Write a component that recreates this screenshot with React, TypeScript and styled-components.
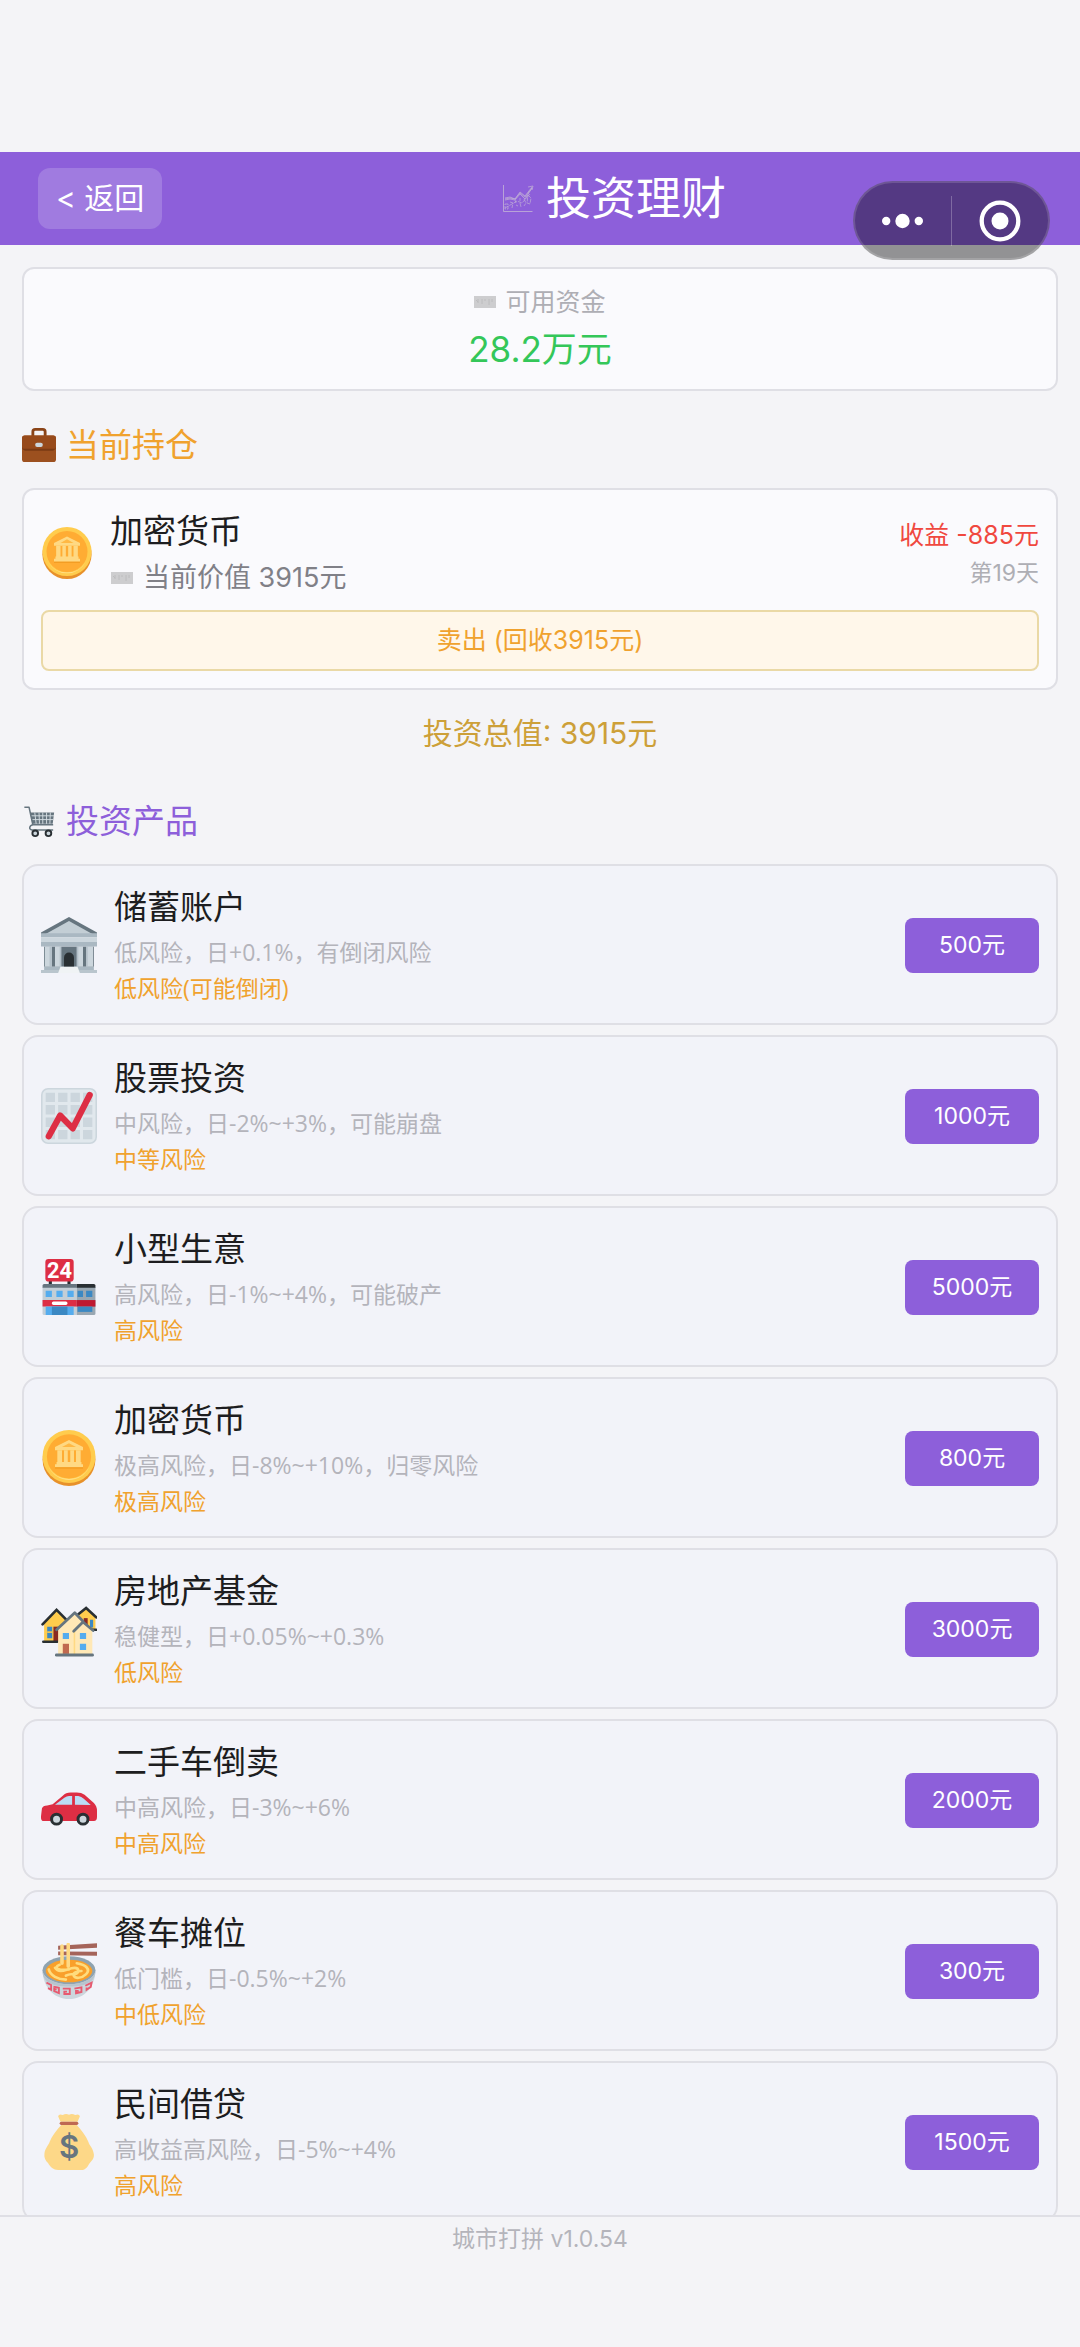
import type { ReactNode } from "react";
import styled, { createGlobalStyle } from "styled-components";

const GlobalStyle = createGlobalStyle`
  * {
    box-sizing: border-box;
  }

  body {
    margin: 0;
    background: #f4f4f7;
    color: #1d1d20;
    font-family: Inter, "Noto Sans CJK SC", sans-serif;
  }

  button {
    margin: 0;
    border: none;
    font-family: inherit;
    cursor: pointer;
  }
`;

const Page = styled.div`
  display: flex;
  flex-direction: column;
  height: 100vh;
  padding-top: 152px;
`;

const Header = styled.header`
  position: relative;
  display: grid;
  grid-template-columns: 1fr auto 1fr;
  align-items: center;
  flex: none;
  padding: 16px 38px;
  background: #8d5fda;
  color: #fff;
`;

const BackButton = styled.button`
  justify-self: start;
  padding: 0 18px;
  border-radius: 12px;
  background: #a07be0;
  color: #fff;
  font-size: 30px;
  line-height: 61px;
`;

const Title = styled.h1`
  display: flex;
  align-items: center;
  gap: 12px;
  margin: 0;
  padding-left: 148px;
  font-size: 45px;
  font-weight: 400;
  line-height: 60px;
`;

/* floats over the header and the top of the page */
const Capsule = styled.div`
  position: absolute;
  top: 29px;
  right: 30px;
  z-index: 1;
  display: flex;
  align-items: center;
  width: 197px;
  height: 79px;
  border: 2px solid rgba(255, 255, 255, 0.15);
  border-radius: 40px;
  background: rgba(0, 0, 0, 0.4);
`;

const CapsuleButton = styled.button`
  display: flex;
  flex: 1;
  justify-content: center;
  padding: 0;
  background: none;
`;

const CapsuleDivider = styled.span`
  width: 1px;
  height: 50px;
  background: rgba(255, 255, 255, 0.25);
`;

const Content = styled.main`
  flex: 1;
  min-height: 0;
  overflow-y: auto;
  padding: 22px;
  scrollbar-width: none;
`;

const Card = styled.section`
  border: 2px solid #dfdfe5;
  border-radius: 12px;
  background: #fafafd;
`;

const BalanceCard = styled(Card)`
  display: flex;
  flex-direction: column;
  align-items: center;
  gap: 7px;
  padding: 16px 16px 17px;
`;

const BalanceLabel = styled.div`
  display: flex;
  align-items: center;
  gap: 9px;
  color: #aeaeb4;
  font-size: 25px;
  line-height: 34px;
`;

const Balance = styled.div`
  color: #34c759;
  font-size: 35px;
  line-height: 46px;
`;

const SectionTitle = styled.h2<{ $color: string }>`
  display: flex;
  align-items: center;
  gap: 10px;
  margin: 31px 0 20px;
  color: ${(p) => p.$color};
  font-size: 33px;
  font-weight: 400;
  line-height: 46px;
`;

const HoldingCard = styled(Card)`
  padding: 18px 17px 17px;
`;

const HoldingRow = styled.div`
  display: flex;
  align-items: center;
  gap: 17px;
  margin-bottom: 12px;
`;

const Info = styled.div`
  flex: 1;
  min-width: 0;
`;

const Name = styled.h3`
  margin: 0 0 4px;
  font-size: 33px;
  font-weight: 400;
  line-height: 46px;
`;

const HoldingValue = styled.div`
  display: flex;
  align-items: center;
  gap: 9px;
  color: #808087;
  font-size: 27px;
  line-height: 40px;
`;

const Result = styled.div`
  padding-top: 2px;
  text-align: right;
  line-height: 38px;
`;

const Profit = styled.div`
  color: #f0483f;
  font-size: 25px;
`;

const Days = styled.div`
  color: #aeaeb4;
  font-size: 23px;
`;

const SellButton = styled.button`
  display: block;
  width: 100%;
  border: 2px solid #ead9a6;
  border-radius: 8px;
  background: #fff7ea;
  color: #f0a22e;
  font-size: 25px;
  line-height: 55px;
`;

const Total = styled.p`
  margin: 0;
  padding: 23px 0 14px;
  color: #cda039;
  font-size: 30px;
  line-height: 40px;
  text-align: center;
`;

const ProductList = styled.ul`
  display: flex;
  flex-direction: column;
  gap: 10px;
  margin: 0;
  padding: 0;
  list-style: none;
`;

const Product = styled.li`
  display: flex;
  align-items: center;
  gap: 17px;
  padding: 18px 17px 17px;
  border: 2px solid #dfdfe5;
  border-radius: 16px;
  background: #f2f3f9;
`;

const Detail = styled.div<{ $risk?: boolean }>`
  color: ${(p) => (p.$risk ? "#f0a22e" : "#b4b4bb")};
  font-family: "Open Sans", "Noto Sans CJK SC", sans-serif;
  font-size: 23px;
  line-height: 36px;
`;

const BuyButton = styled.button`
  min-width: 134px;
  border-radius: 8px;
  background: #8d5fda;
  color: #fff;
  font-size: 23px;
  line-height: 53px;
`;

const Footer = styled.footer`
  flex: none;
  padding: 4px 0 90px;
  border-top: 2px solid #dfdfe5;
  color: #b4b4bb;
  font-size: 23px;
  line-height: 36px;
  text-align: center;
`;

const Emoji = ({ size, children }: { size: number; children: ReactNode }) => (
  <svg width={size} height={size} viewBox="0 0 36 36" aria-hidden="true">
    {children}
  </svg>
);

const TrendGlyph = () => (
  <svg
    width="32"
    height="28"
    viewBox="0 0 32 28"
    fill="none"
    stroke="#c3b3d6"
    aria-hidden="true"
  >
    <path d="M1.5 0v26.5h29" opacity="0.8" />
    <path
      d="M3 13l5-1 5 2 5-7 5 4 7-9M3 15l5-1 5 1 5-6 5 5 7-11M3 14l5-1 5 1 5-6 5 4 7-9M26 2l5-1-1 4"
      opacity="0.7"
    />
    <path
      d="M3 19h3v5H3zM8 17l3 1-1 5M13 15l1 3M14 20l2 1M18 13v3M18 18l1 4M22 14l2 4-2 3M26 10l3 3-1 6-3-1zM3 23l7-4 5-3 5 2 8-9"
      strokeDasharray="4 1"
      opacity="0.65"
    />
  </svg>
);

const NoteGlyph = ({ width }: { width: number }) => (
  <svg width={width} height="12" viewBox="0 0 22 12" aria-hidden="true">
    <rect width="22" height="12" fill="#cdcdcf" />
    <path
      d="M2 4l2 2M4 3v4M8 3v5M10 4h2M15 3v6M18 3v3"
      stroke="#bcbcbe"
      fill="none"
    />
  </svg>
);

const Briefcase = () => (
  <Emoji size={34}>
    <path
      d="M11.5 9V4q0-2.5 2.5-2.5h8q2.5 0 2.5 2.5v5"
      fill="none"
      stroke="#8a4418"
      strokeWidth="3"
    />
    <rect y="8" width="36" height="28" rx="3" fill="#9c501f" />
    <path d="M0 20h36v1q-1 3-4 3H4q-3 0-4-3z" fill="#7a3a14" />
    <path d="M3 8h30q3 0 3 3v9q0 2-3 2H3q-3 0-3-2v-9q0-3 3-3z" fill="#974a1b" />
    <rect x="14" y="15.5" width="8" height="4.5" rx="2" fill="#ccd6dd" />
  </Emoji>
);

const Cart = () => (
  <Emoji size={34}>
    <path d="M8.5 9h25.5l-1.5 12H11z" fill="#66757f" />
    <path
      d="M9 12.5h25M10 16.5h23M13.5 9l1.5 12M18 9l.5 12M22 9v12M26 9v12M30 9l-.5 12"
      stroke="#d5dde2"
    />
    <path
      d="M2.5 3.5h5L11.5 22H33M11.5 22c-4 1-4.5 5-1 5.5H33"
      fill="none"
      stroke="#66757f"
      strokeWidth="1.6"
      strokeLinejoin="round"
    />
    <circle cx="14" cy="31" r="3" fill="#ccd6dd" stroke="#292f33" strokeWidth="2" />
    <circle cx="28" cy="31" r="3" fill="#ccd6dd" stroke="#292f33" strokeWidth="2" />
  </Emoji>
);

const Bank = () => (
  <>
    <path d="M18 0L36 10v2H0v-2z" fill="#66757f" />
    <path d="M18 2.5L33 11H3z" fill="#c3ced5" />
    <path d="M2 19h32v13H2z" fill="#66757f" />
    <path d="M0 10.5h36V13H0zM0 16h36v3H0z" fill="#aab8c2" />
    <path d="M0 13h36v3H0z" fill="#ccd6dd" />
    <path d="M2.5 19H7v13H2.5zM9 19h4v13H9zM23 19h4v13h-4zM29 19h4.5v13H29z" fill="#ccd6dd" />
    <path d="M5.5 19H7v13H5.5zM12 19h1v13h-1zM23 19h1v13h-1zM29 19h1v13h-1z" fill="#b4c1ca" />
    <path d="M14.8 32v-6a3.2 3.2 0 016.4 0v6z" fill="#292f33" />
    <path d="M2 32h12v2H2zM22 32h12v2H22z" fill="#aab8c2" />
    <path d="M0 34h36v2H0z" fill="#b9c5cd" />
    <path d="M12.5 32h11l1.5 4H11z" fill="#f0f3f5" />
  </>
);

const Stocks = () => (
  <>
    <rect x=".5" y=".5" width="35" height="35" rx="4" fill="#e1e8ed" stroke="#ccd6dd" />
    {[3, 11, 19, 27].map((y) => (
      <path
        key={y}
        d={`M3 ${y}h6v6H3zM11 ${y}h6v6h-6zM19 ${y}h6v6h-6zM27 ${y}h6v6h-6z`}
        fill="#ccd6dd"
      />
    ))}
    <path
      d="M5 31l7.3-13.3 8.1 8.3L31.3 4.5"
      fill="none"
      stroke="#dd2e44"
      strokeWidth="4"
      strokeLinecap="round"
      strokeLinejoin="round"
    />
  </>
);

const Store = () => (
  <>
    <path d="M5 14h2v3H5zM17 14h2v3h-2z" fill="#292f33" />
    <rect x="2.8" width="18.2" height="14.5" rx="2" fill="#dd2e44" />
    <text
      x="11.9"
      y="12"
      fill="#fff"
      fontFamily="Roboto, sans-serif"
      fontSize="14"
      fontWeight="700"
      textAnchor="middle"
    >
      24
    </text>
    <path d="M1 18h22v18H2q-1 0-1-1z" fill="#c3ced6" />
    <path d="M23 18h12v17q0 1-1 1H23z" fill="#99a7b2" />
    <path d="M2 16h21v2.5H1V17q0-1 1-1z" fill="#66757f" />
    <path d="M23 16h11q1 0 1 1v1.5H23z" fill="#292f33" />
    <path d="M3 20.4h4v4H3zM9.9 20.4h4v4h-4zM17 20.4h4v4h-4z" fill="#55acee" />
    <path d="M23.5 20.4H27v4h-3.5zM29 20.4h4v4h-4z" fill="#3b88c3" />
    <path d="M1 26.4h22v4.2H1z" fill="#dd2e44" />
    <path d="M23 26.4h12v4.2H23z" fill="#be1931" />
    <rect x="7" y="27.3" width="10" height="2.2" rx="1" fill="#fff" />
    <path d="M3 30.6h18V36H3z" fill="#55acee" />
    <path d="M7 30.6h10V36H7z" fill="#3b88c3" />
    <path d="M23.5 30.6H33V34h-9.5z" fill="#3b88c3" />
  </>
);

const Coin = () => (
  <>
    <circle cx="18" cy="19" r="17" fill="#e8912a" />
    <circle cx="18" cy="17" r="17" fill="#ffcc4d" />
    <circle cx="18" cy="17" r="14.2" fill="#ffac33" />
    <path d="M5 24a14.5 14.5 0 0026 0 15 15 0 01-26 0z" fill="#ffe08a" />
    <path d="M18 6.5l9 4.5v2H9v-2z" fill="#ffd983" />
    <path d="M18 8.5l4.5 2.5h-9z" fill="#ffb844" />
    <path d="M10.5 13h3v8h-3zM14.8 13h2.4v8h-2.4zM18.8 13h2.4v8h-2.4zM22.5 13h3v8h-3z" fill="#ffd983" />
    <path d="M10 20.5h16V22h1v2H9v-2h1z" fill="#ffd983" />
    <path d="M9 24h18v.8H9z" fill="#f19a20" />
  </>
);

const Houses = () => (
  <>
    <path d="M2 14l8-8 8 8v12H2z" fill="#ffcc4d" />
    <path d="M24 9l5-4.5 6 6V18H24z" fill="#ffcc4d" />
    <path d="M8 16.5h4V26H8z" fill="#8a2b22" />
    <path d="M27.5 11H30v5h-2.5z" fill="#8a2b22" />
    <path d="M4 16.5h3.2V24H4zM31.5 12h2v5h-2z" fill="#3b88c3" />
    <path d="M4 20h3.2" stroke="#ffcc4d" />
    <path
      d="M1 15l9-9.3 8 8M24 8.5l5-4 6.5 6M1.500 26.2h9M32 18.5h3.5"
      fill="none"
      stroke="#292f33"
      strokeWidth="1.7"
      strokeLinecap="round"
    />
    <path d="M11 18L21.7 8 27 13l6 6v15H11z" fill="#ffe8b6" />
    <path d="M21 19.5l1-1V34h-1z" fill="#ffd983" />
    <path
      d="M10 18.5l11.7-11L27 13M21 19.5l6-6 6.5 5.5"
      fill="none"
      stroke="#66757f"
      strokeWidth="1.8"
      strokeLinecap="round"
      strokeLinejoin="round"
    />
    <path d="M14 20.5h4v4h-4zM25 20.5h4v4h-4zM25 27.5h4v4h-4z" fill="#55acee" />
    <path d="M14 27.5h4V34h-4z" fill="#c1694f" />
    <rect x="9" y="33.8" width="25" height="1.9" rx=".9" fill="#66757f" />
  </>
);

const Car = () => (
  <>
    <path
      d="M1 31.5Q-.2 31 0 28.5l.6-5q.6-2 3.4-2l3.5-.8 6.5-5.500q2-2 5-2h4q3 0 5 1.500l6 5.3q2 2 2 5v4q0 2.500-2 2.500z"
      fill="#dd2e44"
    />
    <path d="M9 21l6-4.500q1.500-1 3-1h2V21z" fill="#bbddf5" />
    <path d="M21.8 15.5H24q2 .3 3.5 1.7l4.500 4-10.200-.2z" fill="#bbddf5" />
    <circle cx="10" cy="30.3" r="3.2" fill="#ccd6dd" stroke="#292f33" strokeWidth="1.9" />
    <circle cx="27" cy="30.3" r="3.2" fill="#ccd6dd" stroke="#292f33" strokeWidth="1.9" />
  </>
);

const Noodles = () => (
  <>
    <path d="M1 17c0 11 7 19 17 19s17-8 17-19z" fill="#ccd6dd" />
    <ellipse cx="18" cy="17.5" rx="17" ry="9" fill="#8fa3b0" />
    <path d="M1 18c1 5 8 8.5 17 8.5S34 23 35 18c0 7-6 10-17 10S1 25 1 18z" fill="#b8c5ce" />
    <ellipse cx="18" cy="18" rx="15" ry="7.3" fill="#f9a02b" />
    <path
      d="M5 17c1 4 6 6.5 11 6.5M9 16c2 3 5 2 8 1s7-2 7 1-5 1-8 3M12 14c-5 2 0 4 6 3M23 13c6 1 9 4 6 7s-7 3-8 1 3-3 5-3"
      fill="none"
      stroke="#ffdc7d"
      strokeWidth="1.7"
      strokeLinecap="round"
    />
    <path d="M11 1.8L36 .2V3L11 4.3zM11 5.5l25 .2v2.5l-25-.4z" fill="#a5645a" />
    <path
      d="M13.5 2v11M17.5 1v14"
      fill="none"
      stroke="#ffd983"
      strokeWidth="2.3"
      strokeLinecap="round"
    />
    <path
      d="M3.5 25.5l3 1.5v3l-2-1M8 28l3.5.8v3.4L8.500 31v-1.500l1.500.5M14 29.3h4.5v3.5H15v-1.500h1.7M21.5 29.3l4.5-.8v3l-3.5.8v-1.500h1.7M28.5 27.5l4-2-.5 2.7-2.7 1.8v-1.4"
      fill="none"
      stroke="#e75a70"
      strokeWidth="1.2"
    />
  </>
);

const MoneyBag = () => (
  <>
    <path
      d="M12.5 5L11 1.5Q11.5-.3 14 .7q2-1.2 4-.2 2-1 4 .2 2.5-1 3 .8L23.5 5z"
      fill="#fdd888"
    />
    <path
      d="M13 7h10c3 3.5 6 7 7.5 11 .5 2 3 4 3.5 8 .3 3-2 4.5-3 6-1.500 3-3 4-5 4H11c-3 0-5-2-6.500-4.500C3 30 1.800 28 2.200 25.500c.3-3.500 2.800-5.500 3.300-7.500C7 14 10 10.500 13 7z"
      fill="#fdd888"
    />
    <rect x="12" y="5" width="12" height="2" rx="1" fill="#bf6952" />
    <text
      x="18"
      y="28.5"
      fill="#67757f"
      fontFamily="Inter, sans-serif"
      fontSize="20"
      fontWeight="600"
      textAnchor="middle"
    >
      $
    </text>
  </>
);

const products = [
  {
    name: "储蓄账户",
    desc: "低风险，日+0.1%，有倒闭风险",
    risk: "低风险(可能倒闭)",
    price: 500,
    icon: <Bank />,
  },
  {
    name: "股票投资",
    desc: "中风险，日-2%~+3%，可能崩盘",
    risk: "中等风险",
    price: 1000,
    icon: <Stocks />,
  },
  {
    name: "小型生意",
    desc: "高风险，日-1%~+4%，可能破产",
    risk: "高风险",
    price: 5000,
    icon: <Store />,
  },
  {
    name: "加密货币",
    desc: "极高风险，日-8%~+10%，归零风险",
    risk: "极高风险",
    price: 800,
    icon: <Coin />,
  },
  {
    name: "房地产基金",
    desc: "稳健型，日+0.05%~+0.3%",
    risk: "低风险",
    price: 3000,
    icon: <Houses />,
  },
  {
    name: "二手车倒卖",
    desc: "中高风险，日-3%~+6%",
    risk: "中高风险",
    price: 2000,
    icon: <Car />,
  },
  {
    name: "餐车摊位",
    desc: "低门槛，日-0.5%~+2%",
    risk: "中低风险",
    price: 300,
    icon: <Noodles />,
  },
  {
    name: "民间借贷",
    desc: "高收益高风险，日-5%~+4%",
    risk: "高风险",
    price: 1500,
    icon: <MoneyBag />,
  },
];

export default function App() {
  return (
    <>
      <GlobalStyle />
      <Page>
        <Header>
          <BackButton type="button">&lt; 返回</BackButton>
          <Title>
            <TrendGlyph />
            投资理财
          </Title>
          <Capsule>
            <CapsuleButton type="button" aria-label="更多">
              <svg width="42" height="42" viewBox="0 0 42 42" fill="#fff">
                <circle cx="4.2" cy="21" r="4.2" />
                <circle cx="20.5" cy="21" r="7.2" />
                <circle cx="36.8" cy="21" r="4.2" />
              </svg>
            </CapsuleButton>
            <CapsuleDivider />
            <CapsuleButton type="button" aria-label="关闭">
              <svg width="42" height="42" viewBox="0 0 42 42" fill="#fff">
                <circle cx="21" cy="21" r="18.3" fill="none" stroke="#fff" strokeWidth="4.3" />
                <circle cx="21" cy="21" r="8.5" />
              </svg>
            </CapsuleButton>
          </Capsule>
        </Header>

        <Content>
          <BalanceCard>
            <BalanceLabel>
              <NoteGlyph width={22} />
              可用资金
            </BalanceLabel>
            <Balance>28.2万元</Balance>
          </BalanceCard>

          <SectionTitle $color="#f0a22e">
            <Briefcase />
            当前持仓
          </SectionTitle>
          <HoldingCard>
            <HoldingRow>
              <Emoji size={52}>
                <Coin />
              </Emoji>
              <Info>
                <Name>加密货币</Name>
                <HoldingValue>
                  <NoteGlyph width={24} />
                  当前价值 3915元
                </HoldingValue>
              </Info>
              <Result>
                <Profit>收益 -885元</Profit>
                <Days>第19天</Days>
              </Result>
            </HoldingRow>
            <SellButton type="button">卖出 (回收3915元)</SellButton>
          </HoldingCard>
          <Total>投资总值: 3915元</Total>

          <SectionTitle $color="#8d5fda">
            <Cart />
            投资产品
          </SectionTitle>
          <ProductList>
            {products.map((product) => (
              <Product key={product.name}>
                <Emoji size={56}>{product.icon}</Emoji>
                <Info>
                  <Name>{product.name}</Name>
                  <Detail>{product.desc}</Detail>
                  <Detail $risk>{product.risk}</Detail>
                </Info>
                <BuyButton type="button">{product.price}元</BuyButton>
              </Product>
            ))}
          </ProductList>
        </Content>

        <Footer>城市打拼 v1.0.54</Footer>
      </Page>
    </>
  );
}
